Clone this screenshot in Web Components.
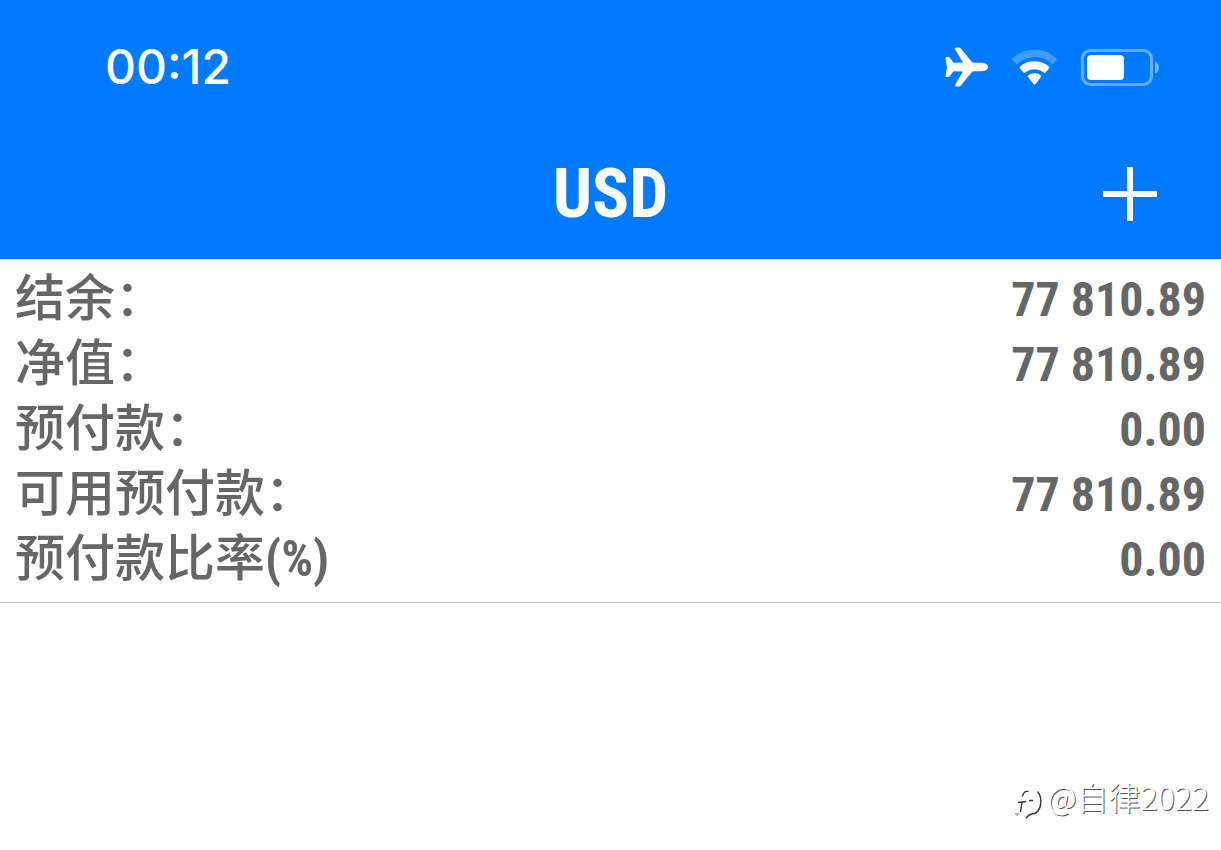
<!DOCTYPE html>
<html lang="zh-CN">
<head>
<meta charset="utf-8">
<meta name="viewport" content="width=device-width, initial-scale=1">
<title>USD</title>
<style>
  body {
    margin: 0;
    background: #fff;
    font-family: "Roboto Condensed", "Liberation Sans", "Noto Sans CJK SC", sans-serif;
  }
</style>
</head>
<body>
<account-screen>
  <status-bar slot="header" time="00:12"></status-bar>
  <nav-bar slot="header">USD</nav-bar>
  <account-summary></account-summary>
  <user-watermark slot="overlay">@自律2022</user-watermark>
</account-screen>

<script>
class AccountScreen extends HTMLElement {
  constructor() {
    super();
    this.attachShadow({ mode: "open" });
  }

  static get styles() {
    return /* css */`
      :host {
        display: block;
        position: relative;
        min-height: 100vh;
      }

      header {
        background: #007aff;
        color: #fff;
      }
    `;
  }

  connectedCallback() {
    this.shadowRoot.innerHTML = /* html */`
    <style>${AccountScreen.styles}</style>
    <header><slot name="header"></slot></header>
    <main><slot></slot></main>
    <slot name="overlay"></slot>`;
  }
}

class StatusBar extends HTMLElement {
  constructor() {
    super();
    this.attachShadow({ mode: "open" });
  }

  static get styles() {
    return /* css */`
      :host {
        display: flex;
        align-items: center;
        justify-content: space-between;
        padding: 6px 62px 0 105px;
        height: 122px;
      }

      time {
        font: 500 48px/56px Inter, sans-serif;
      }

      .icons {
        display: flex;
        align-items: center;
        gap: 24px;
      }

      svg {
        display: block;
      }
    `;
  }

  connectedCallback() {
    const time = this.getAttribute("time");

    this.shadowRoot.innerHTML = /* html */`
    <style>${StatusBar.styles}</style>
    <time datetime="${time}">${time}</time>
    <div class="icons">
      <svg width="44" height="40" viewBox="0 0 44 40" fill="#fff" aria-hidden="true">
        <path d="M2.500 10H4q1 0 2 1l3.500 4.800 9.500-.3L11.500 3Q10.500 .5 12.500 .5H15q1.200 0 2 1.200L27.500 14.500q1 1.200 3 1.200h7q6.500.5 6.500 4.300t-6.500 4.300h-7q-2 0-3 1.200L17 38.300q-.8 1.200-2 1.200h-2.500q-2 0-1-2.500L19 24.500l-9.500-.3L6 29q-1 1-2 1H2.500Q1.200 30 1.500 28.500L3 20 1.500 11.500Q1.200 10 2.500 10z"/>
      </svg>
      <svg width="45" height="36" viewBox="0 0 45 36" fill="#fff" aria-hidden="true">
        <path opacity=".25" d="M.7 9.300Q10 .5 22.500 .5t21.800 8.800q1 1 0 2l-3.200 3.400q-1 1-2 0Q32.500 8 22.500 8T5.900 14.700q-1 1-2 0L.7 11.300q-1-1 0-2z"/>
        <path d="M8 17.500Q14 12.300 22.500 12.300t14.500 5.200q1 1 0 2l-3.300 3.700q-1 1-2.200 0Q27.500 20.300 22.500 20.300t-9 2.900q-1.200 1-2.200 0L8 19.500q-1-1 0-2z"/>
        <path d="M16 26.500q2.700-2.500 6.500-2.500t6.500 2.500q.8.800 0 1.600l-5.500 6.900q-1 1-2 0L16 28.100q-.8-.8 0-1.600z"/>
      </svg>
      <svg width="78" height="37" viewBox="0 0 78 37" aria-hidden="true">
        <rect x="1.500" y="1.500" width="69" height="34" rx="8" fill="none" stroke="#fff" stroke-opacity=".4" stroke-width="3"/>
        <rect x="6" y="6" width="37" height="25" rx="4" fill="#fff"/>
        <path d="M74 12.500q4 2 4 6t-4 6z" fill="#fff" fill-opacity=".45"/>
      </svg>
    </div>`;
  }
}

class NavBar extends HTMLElement {
  constructor() {
    super();
    this.attachShadow({ mode: "open" });
  }

  static get styles() {
    return /* css */`
      :host {
        display: grid;
        grid-template-columns: 1fr auto 1fr;
        align-items: center;
        height: 131px;
        padding: 0 64px;
      }

      h1 {
        grid-column: 2;
        margin: 0;
        font-size: 69px;
        line-height: 80px;
        font-weight: 700;
      }

      button {
        justify-self: end;
        padding: 0;
        border: 0;
        background: none;
        color: inherit;
        cursor: pointer;
      }

      svg {
        display: block;
      }
    `;
  }

  connectedCallback() {
    this.shadowRoot.innerHTML = /* html */`
    <style>${NavBar.styles}</style>
    <h1><slot></slot></h1>
    <button type="button" aria-label="添加">
      <svg width="54" height="54" viewBox="0 0 54 54" stroke="#fff" stroke-width="6">
        <path d="M0 27h54M27 0v54"/>
      </svg>
    </button>`;
  }
}

class AccountSummary extends HTMLElement {
  constructor() {
    super();
    this.attachShadow({ mode: "open" });
    this.rows = [
      ["结余：", "77 810.89"],
      ["净值：", "77 810.89"],
      ["预付款：", "0.00"],
      ["可用预付款：", "77 810.89"],
      ["预付款比率<b>(%)</b>", "0.00"],
    ];
  }

  static get styles() {
    return /* css */`
      :host {
        display: block;
        padding: 8px 15px 10px;
        border-bottom: 1px solid #c8c8cc;
        color: #666;
      }

      dl {
        margin: 0;
      }

      div {
        display: flex;
        justify-content: space-between;
        line-height: 65px;
      }

      dt {
        font-size: 50px;
        font-weight: 500;
      }

      b {
        font-weight: 700;
      }

      dd {
        margin: 0;
        font-size: 48px;
        font-weight: 700;
      }
    `;
  }

  connectedCallback() {
    const rows = this.rows
      .map(([label, value]) => `<div><dt>${label}</dt><dd>${value}</dd></div>`)
      .join("");

    this.shadowRoot.innerHTML = /* html */`
    <style>${AccountSummary.styles}</style>
    <dl>${rows}</dl>`;
  }
}

class UserWatermark extends HTMLElement {
  constructor() {
    super();
    this.attachShadow({ mode: "open" });
  }

  static get styles() {
    return /* css */`
      :host {
        position: absolute;
        right: 12px;
        bottom: 30px;
        display: flex;
        align-items: flex-end;
        gap: 4px;
        color: #fff;
        font: 300 32px/40px "Noto Sans CJK SC", sans-serif;
        text-shadow: 1px 1px 0 #555;
      }

      svg {
        display: block;
      }

      span {
        padding-bottom: 4px;
      }
    `;
  }

  connectedCallback() {
    this.shadowRoot.innerHTML = /* html */`
    <style>${UserWatermark.styles}</style>
    <svg width="28" height="32" viewBox="0 0 28 32" fill="none" stroke="#333" stroke-width="1.400" aria-hidden="true">
      <path d="M13.500 3.500Q8.500 2.500 7.500 8.500M3 14.500l8-1M7 14.500L5.500 24M14 12.500h4"/>
      <path d="M3.500 25L2 28M0 26l2-.5" stroke-opacity=".5"/>
      <path d="M22.500 3.500Q27 9 25.500 17q-1 6-6 8.500-6 .5-8.500 5"/>
    </svg>
    <span><slot></slot></span>`;
  }
}

customElements.define("account-screen", AccountScreen);
customElements.define("status-bar", StatusBar);
customElements.define("nav-bar", NavBar);
customElements.define("account-summary", AccountSummary);
customElements.define("user-watermark", UserWatermark);
</script>
</body>
</html>
